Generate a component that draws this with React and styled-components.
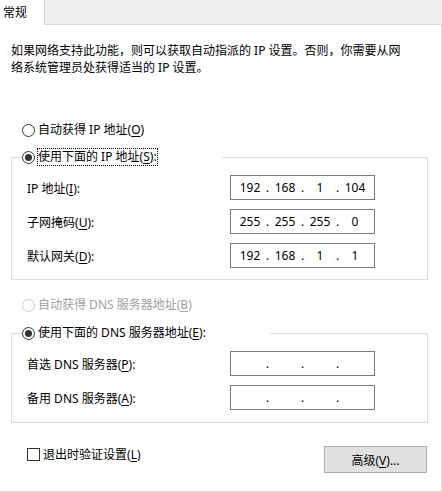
import React from "react";
import styled, { createGlobalStyle } from "styled-components";

const GlobalStyle = createGlobalStyle`
  html, body { margin: 0; padding: 0; background: #ffffff; }
  body {
    font-family: "Noto Sans", "Noto Sans CJK SC", sans-serif;
    font-size: 12px;
    color: #000000;
  }
  * { box-sizing: border-box; }
`;

const Window = styled.div`
  width: 442px;
  height: 492px;
  display: flex;
  flex-direction: column;
  background: #ffffff;
`;

const TabStrip = styled.div`
  display: flex;
  height: 25px;
  flex: none;
`;

const Tab = styled.div`
  width: 45px;
  height: 25px;
  padding-left: 3px;
  line-height: 25px;
  background: #ffffff;
  border-right: 1px solid #d9d9d9;
`;

const TabFiller = styled.div`
  flex: 1;
  background: #f0f0f0;
  border-bottom: 1px solid #d9d9d9;
`;

const Panel = styled.div`
  flex: 1;
  display: flex;
  flex-direction: column;
  padding: 0 13px 0 11px;
  border-right: 1px solid #d9d9d9;
  border-bottom: 1px solid #d9d9d9;
`;

const Description = styled.p`
  margin: 17px 0 0 0;
  line-height: 17px;
`;

const RadioRow = styled.div`
  display: flex;
  align-items: center;
  height: 20px;
  margin-top: ${(p) => p.$mt}px;
  padding-left: 11px;
  color: ${(p) => (p.$disabled ? "#a0a0a0" : "#000000")};
`;

const RadioCircle = styled.span`
  position: relative;
  width: 13px;
  height: 13px;
  flex: none;
  border-radius: 50%;
  border: 1px solid ${(p) => (p.$disabled ? "#cccccc" : "#333333")};
  background: #ffffff;
  display: flex;
  align-items: center;
  justify-content: center;
  &::after {
    content: "";
    display: ${(p) => (p.$checked ? "block" : "none")};
    width: 7px;
    height: 7px;
    border-radius: 50%;
    background: #333333;
  }
`;

const RadioLabel = styled.span`
  margin-left: 2px;
  padding: 0 1px;
  height: 18px;
  line-height: 17px;
  white-space: nowrap;
  outline: ${(p) => (p.$focused ? "1px dotted #000000" : "none")};
  outline-offset: -1px;
`;

const Key = styled.span`
  text-decoration: underline;
  text-underline-offset: 2px;
`;

const GroupBox = styled.fieldset`
  margin: ${(p) => p.$mt}px 0 0 0;
  min-width: 0;
  border: 1px solid #dcdcdc;
  padding: 8px 0 ${(p) => p.$pb}px 0;
`;

const Legend = styled.legend`
  margin-left: 10px;
  padding: 0;
  width: ${(p) => p.$w}px;
  height: 20px;
  display: flex;
  align-items: center;
  background: #ffffff;
`;

const LegendRadio = styled(RadioRow)`
  padding-left: 0;
  margin-top: 0;
`;

const FieldRows = styled.div`
  display: flex;
  flex-direction: column;
  gap: 9px;
  padding-left: 15px;
`;

const FieldRow = styled.div`
  display: grid;
  grid-template-columns: 203px 145px;
  align-items: center;
  height: 25px;
`;

const FieldLabel = styled.span`
  white-space: nowrap;
`;

const IpBox = styled.div`
  width: 145px;
  height: 25px;
  border: 1px solid #7a7a7a;
  background: #ffffff;
  display: flex;
  align-items: center;
  padding-left: 4px;
`;

const IpSegment = styled.span`
  width: 30px;
  text-align: center;
`;

const IpDot = styled.span`
  width: 5px;
  text-align: center;
`;

const Footer = styled.div`
  display: flex;
  justify-content: space-between;
  align-items: flex-start;
  margin-top: 23px;
  padding-left: 16px;
`;

const CheckRow = styled.label`
  display: flex;
  align-items: center;
  height: 16px;
`;

const CheckBox = styled.span`
  width: 13px;
  height: 13px;
  border: 1px solid #333333;
  background: #ffffff;
  flex: none;
`;

const CheckText = styled.span`
  margin-left: 3px;
`;

const Button = styled.button`
  width: 103px;
  height: 27px;
  margin-right: 1px;
  padding: 0;
  background: #e1e1e1;
  border: 1px solid #adadad;
  font-family: inherit;
  font-size: 12px;
  color: #000000;
`;

function IpField({ value }) {
  const parts = value ? value.split(".") : ["", "", "", ""];
  const out = [];
  parts.forEach((p, i) => {
    out.push(<IpSegment key={"s" + i}>{p}</IpSegment>);
    if (i < 3) out.push(<IpDot key={"d" + i}>.</IpDot>);
  });
  return <IpBox>{out}</IpBox>;
}

function Label({ pre, k, post }) {
  return (
    <>
      {pre}(<Key>{k}</Key>){post}
    </>
  );
}

export default function App() {
  return (
    <>
      <GlobalStyle />
      <Window>
        <TabStrip>
          <Tab>常规</Tab>
          <TabFiller />
        </TabStrip>
        <Panel>
          <Description>
            如果网络支持此功能，则可以获取自动指派的 IP 设置。否则，你需要从网
            <br />
            络系统管理员处获得适当的 IP 设置。
          </Description>

          <RadioRow $mt={44}>
            <RadioCircle />
            <RadioLabel>
              <Label pre="自动获得 IP 地址" k="O" post="" />
            </RadioLabel>
          </RadioRow>

          <GroupBox $mt={7} $pb={11}>
            <Legend $w={200}>
              <LegendRadio>
                <RadioCircle $checked />
                <RadioLabel $focused>
                  <Label pre="使用下面的 IP 地址" k="S" post=":" />
                </RadioLabel>
              </LegendRadio>
            </Legend>
            <FieldRows>
              <FieldRow>
                <FieldLabel>
                  <Label pre="IP 地址" k="I" post=":" />
                </FieldLabel>
                <IpField value="192.168.1.104" />
              </FieldRow>
              <FieldRow>
                <FieldLabel>
                  <Label pre="子网掩码" k="U" post=":" />
                </FieldLabel>
                <IpField value="255.255.255.0" />
              </FieldRow>
              <FieldRow>
                <FieldLabel>
                  <Label pre="默认网关" k="D" post=":" />
                </FieldLabel>
                <IpField value="192.168.1.1" />
              </FieldRow>
            </FieldRows>
          </GroupBox>

          <RadioRow $mt={15} $disabled>
            <RadioCircle $disabled />
            <RadioLabel>
              <Label pre="自动获得 DNS 服务器地址" k="B" post="" />
            </RadioLabel>
          </RadioRow>

          <GroupBox $mt={8} $pb={12}>
            <Legend $w={248}>
              <LegendRadio>
                <RadioCircle $checked />
                <RadioLabel>
                  <Label pre="使用下面的 DNS 服务器地址" k="E" post=":" />
                </RadioLabel>
              </LegendRadio>
            </Legend>
            <FieldRows>
              <FieldRow>
                <FieldLabel>
                  <Label pre="首选 DNS 服务器" k="P" post=":" />
                </FieldLabel>
                <IpField value="" />
              </FieldRow>
              <FieldRow>
                <FieldLabel>
                  <Label pre="备用 DNS 服务器" k="A" post=":" />
                </FieldLabel>
                <IpField value="" />
              </FieldRow>
            </FieldRows>
          </GroupBox>

          <Footer>
            <CheckRow>
              <CheckBox />
              <CheckText>
                <Label pre="退出时验证设置" k="L" post="" />
              </CheckText>
            </CheckRow>
            <Button>
              <Label pre="高级" k="V" post="..." />
            </Button>
          </Footer>
        </Panel>
      </Window>
    </>
  );
}
